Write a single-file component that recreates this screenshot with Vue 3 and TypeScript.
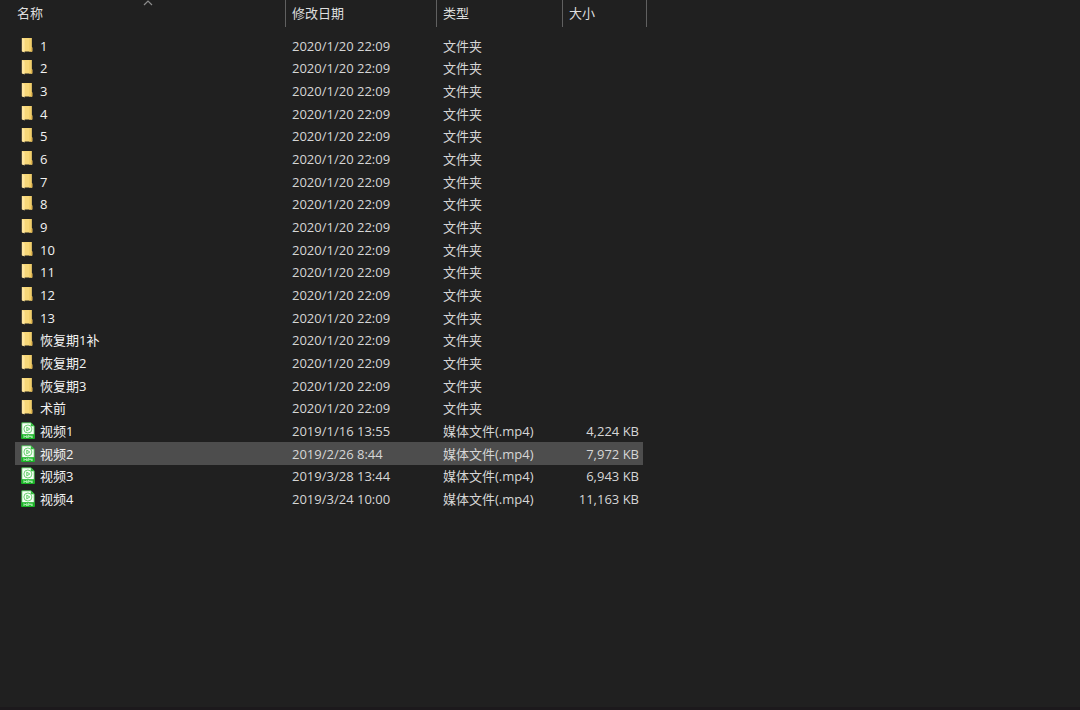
<script setup lang="ts">
import { ref } from 'vue'

interface Entry {
  name: string
  date: string
  kind: 'folder' | 'video'
  size: string
}

const folderNames: string[] = [
  ...Array.from({ length: 13 }, (_, i) => String(i + 1)),
  '恢复期1补',
  '恢复期2',
  '恢复期3',
  '术前',
]

const entries: Entry[] = [
  ...folderNames.map((name): Entry => ({ name, date: '2020/1/20 22:09', kind: 'folder', size: '' })),
  { name: '视频1', date: '2019/1/16 13:55', kind: 'video', size: '4,224 KB' },
  { name: '视频2', date: '2019/2/26 8:44', kind: 'video', size: '7,972 KB' },
  { name: '视频3', date: '2019/3/28 13:44', kind: 'video', size: '6,943 KB' },
  { name: '视频4', date: '2019/3/24 10:00', kind: 'video', size: '11,163 KB' },
]

const columns = ['名称', '修改日期', '类型', '大小']
const selected = ref('视频2')
</script>

<template>
  <main class="explorer">
    <table class="files">
      <colgroup>
        <col class="col-name" />
        <col class="col-date" />
        <col class="col-type" />
        <col class="col-size" />
      </colgroup>
      <thead>
        <tr>
          <th v-for="(column, i) in columns" :key="column" scope="col">
            <button type="button" class="heading">{{ column }}</button>
            <svg v-if="i === 0" class="sort" viewBox="0 0 10 6" aria-hidden="true">
              <path d="M1 5 L5 1 L9 5" fill="none" stroke="#8c8c8c" stroke-width="1.2" />
            </svg>
          </th>
        </tr>
      </thead>
      <tbody>
        <tr
          v-for="entry in entries"
          :key="entry.name"
          :class="{ selected: entry.name === selected }"
          @click="selected = entry.name"
        >
          <td>
            <div class="name">
              <svg v-if="entry.kind === 'folder'" class="icon" viewBox="0 0 14 17" aria-hidden="true">
                <path d="M1 1 H10.6 V10 L11.2 10.6 V14.4 H1 Z" fill="#f7d778" />
                <path d="M8 1 H10.6 V10 L11.2 10.6 V14.4 H8 Z" fill="#f2cf6b" />
                <path d="M10 10.6 H11.2 V14.4 H10 Z" fill="#e0b24c" />
                <path d="M0.8 1 L3.6 2.4 V15.4 L0.8 14.2 Z" fill="#ffe69f" />
              </svg>
              <svg v-else class="icon" viewBox="0 0 14 17" aria-hidden="true">
                <path d="M0.8 0.8 H10 L13.2 4 V16.2 H0.8 Z" fill="#f6fff6" stroke="#3cc046" stroke-width="0.8" />
                <path d="M9.8 0.6 L13.4 4.2 H9.8 Z" fill="#2fbd3a" />
                <circle cx="6.9" cy="7" r="4" fill="none" stroke="#6fd275" stroke-width="1" />
                <path d="M5.7 5 L8.9 7 L5.7 9 Z" fill="#c9f1cb" stroke="#4cc554" stroke-width="0.7" />
                <path d="M0.4 12.2 H13.6 V17 H0.4 Z" fill="#17b524" />
                <path
                  d="M3 16 V13.6 L4.2 14.9 L5.4 13.6 V16 M6.8 16 V13.7 H8.3 V15 H6.8 M9.7 13.5 V15 H11.4 M11 13.5 V16"
                  fill="none"
                  stroke="#d9fadb"
                  stroke-width="0.8"
                />
              </svg>
              <span>{{ entry.name }}</span>
            </div>
          </td>
          <td class="detail">{{ entry.date }}</td>
          <td class="detail">{{ entry.kind === 'folder' ? '文件夹' : '媒体文件(.mp4)' }}</td>
          <td class="detail size">{{ entry.size }}</td>
        </tr>
      </tbody>
    </table>
  </main>
</template>

<style>
body {
  background: #202020;
}
</style>

<style scoped>
.explorer {
  box-sizing: border-box;
  min-height: 100vh;
  padding-left: 15px;
  background: #202020;
  border-bottom: 3px solid #1c191c;
  color: #f2f2f2;
  font-family: 'Open Sans', 'Noto Sans', 'Noto Sans CJK SC', sans-serif;
  font-size: 13px;
  line-height: 20px;
}

.files {
  width: 628px;
  table-layout: fixed;
  border-collapse: collapse;
}

.col-name {
  width: 270px;
}

.col-date {
  width: 151px;
}

.col-type {
  width: 126px;
}

th {
  position: relative;
  height: 34px;
  padding: 0;
  vertical-align: top;
  font-weight: 400;
}

.heading {
  display: block;
  box-sizing: border-box;
  width: 100%;
  height: 27px;
  padding: 0 6px 1px;
  border: 0;
  border-left: 1px solid #606060;
  background: none;
  color: #dedede;
  font: inherit;
  text-align: left;
}

th:first-child .heading {
  padding-left: 2px;
  border-left: 0;
}

/* closing divider of the last column, just outside the row highlight */
th:last-child::after {
  content: '';
  position: absolute;
  top: 0;
  right: -4px;
  width: 1px;
  height: 27px;
  background: #606060;
}

.sort {
  position: absolute;
  top: 0;
  right: 4px;
  left: 0;
  width: 10px;
  height: 6px;
  margin: 0 auto;
}

td {
  height: 23px;
  padding: 0;
  white-space: nowrap;
}

tr:nth-child(3n + 2) td {
  height: 22px;
}

.selected td {
  background: #4d4d4d;
}

.name {
  display: flex;
  align-items: center;
  gap: 5px;
  padding-left: 6px;
}

.icon {
  flex: none;
  width: 14px;
  height: 17px;
  margin-bottom: 1px;
}

.detail {
  padding-left: 7px;
  color: #d6d6d6;
}

.size {
  padding-right: 4px;
  text-align: right;
}
</style>
